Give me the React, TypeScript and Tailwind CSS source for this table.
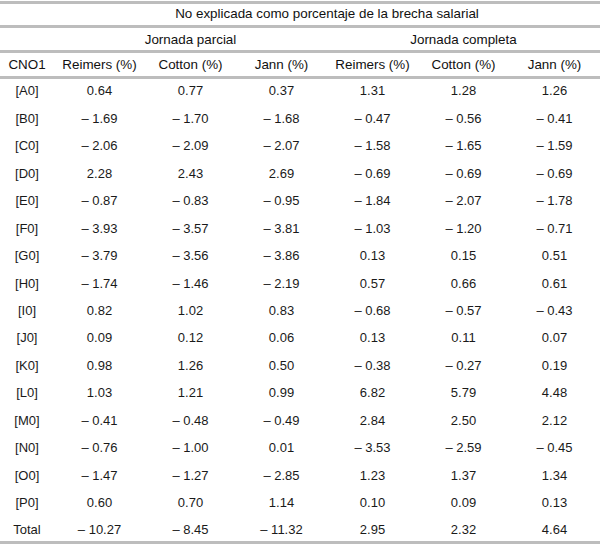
const rows: [string, string[]][] = [
  ["[A0]", ["0.64", "0.77", "0.37", "1.31", "1.28", "1.26"]],
  ["[B0]", ["– 1.69", "– 1.70", "– 1.68", "– 0.47", "– 0.56", "– 0.41"]],
  ["[C0]", ["– 2.06", "– 2.09", "– 2.07", "– 1.58", "– 1.65", "– 1.59"]],
  ["[D0]", ["2.28", "2.43", "2.69", "– 0.69", "– 0.69", "– 0.69"]],
  ["[E0]", ["– 0.87", "– 0.83", "– 0.95", "– 1.84", "– 2.07", "– 1.78"]],
  ["[F0]", ["– 3.93", "– 3.57", "– 3.81", "– 1.03", "– 1.20", "– 0.71"]],
  ["[G0]", ["– 3.79", "– 3.56", "– 3.86", "0.13", "0.15", "0.51"]],
  ["[H0]", ["– 1.74", "– 1.46", "– 2.19", "0.57", "0.66", "0.61"]],
  ["[I0]", ["0.82", "1.02", "0.83", "– 0.68", "– 0.57", "– 0.43"]],
  ["[J0]", ["0.09", "0.12", "0.06", "0.13", "0.11", "0.07"]],
  ["[K0]", ["0.98", "1.26", "0.50", "– 0.38", "– 0.27", "0.19"]],
  ["[L0]", ["1.03", "1.21", "0.99", "6.82", "5.79", "4.48"]],
  ["[M0]", ["– 0.41", "– 0.48", "– 0.49", "2.84", "2.50", "2.12"]],
  ["[N0]", ["– 0.76", "– 1.00", "0.01", "– 3.53", "– 2.59", "– 0.45"]],
  ["[O0]", ["– 1.47", "– 1.27", "– 2.85", "1.23", "1.37", "1.34"]],
  ["[P0]", ["0.60", "0.70", "1.14", "0.10", "0.09", "0.13"]],
  ["Total", ["– 10.27", "– 8.45", "– 11.32", "2.95", "2.32", "4.64"]],
];

const methods = ["Reimers (%)", "Cotton (%)", "Jann (%)"];

function Rule() {
  return <div className="h-[3px] bg-[#bdbdbd]" />;
}

export default function App() {
  return (
    <div className="w-[600px] h-[545px] bg-white pt-px text-[13px] text-[#1a1a1a] font-['Liberation_Sans',Arial,sans-serif]">
      <Rule />
      <div className="h-[21px] grid grid-cols-[54px_1fr] items-center text-center text-[13.4px] text-[#111]">
        <div />
        <div>No explicada como porcentaje de la brecha salarial</div>
      </div>
      <Rule />
      <div className="h-[22px] pt-[2px] grid grid-cols-[54px_1fr_1fr] items-center text-center text-[13.4px] text-[#111]">
        <div />
        <div>Jornada parcial</div>
        <div>Jornada completa</div>
      </div>
      <Rule />
      <div className="h-[23px] pt-[2px] grid grid-cols-[54px_repeat(6,1fr)] items-center text-center text-[13.4px] text-[#111]">
        <div>CNO1</div>
        {[...methods, ...methods].map((m, i) => (
          <div key={i}>{m}</div>
        ))}
      </div>
      <Rule />
      {rows.map(([code, vals], r) => (
        <div
          key={code}
          className={
            r === rows.length - 1
              ? "h-[23px] grid grid-cols-[54px_repeat(6,1fr)] items-center text-center"
              : "h-[27.44px] pb-[3px] grid grid-cols-[54px_repeat(6,1fr)] items-center text-center"
          }
        >
          <div>{code}</div>
          {vals.map((v, i) => (
            <div key={i}>{v}</div>
          ))}
        </div>
      ))}
      <Rule />
    </div>
  );
}
